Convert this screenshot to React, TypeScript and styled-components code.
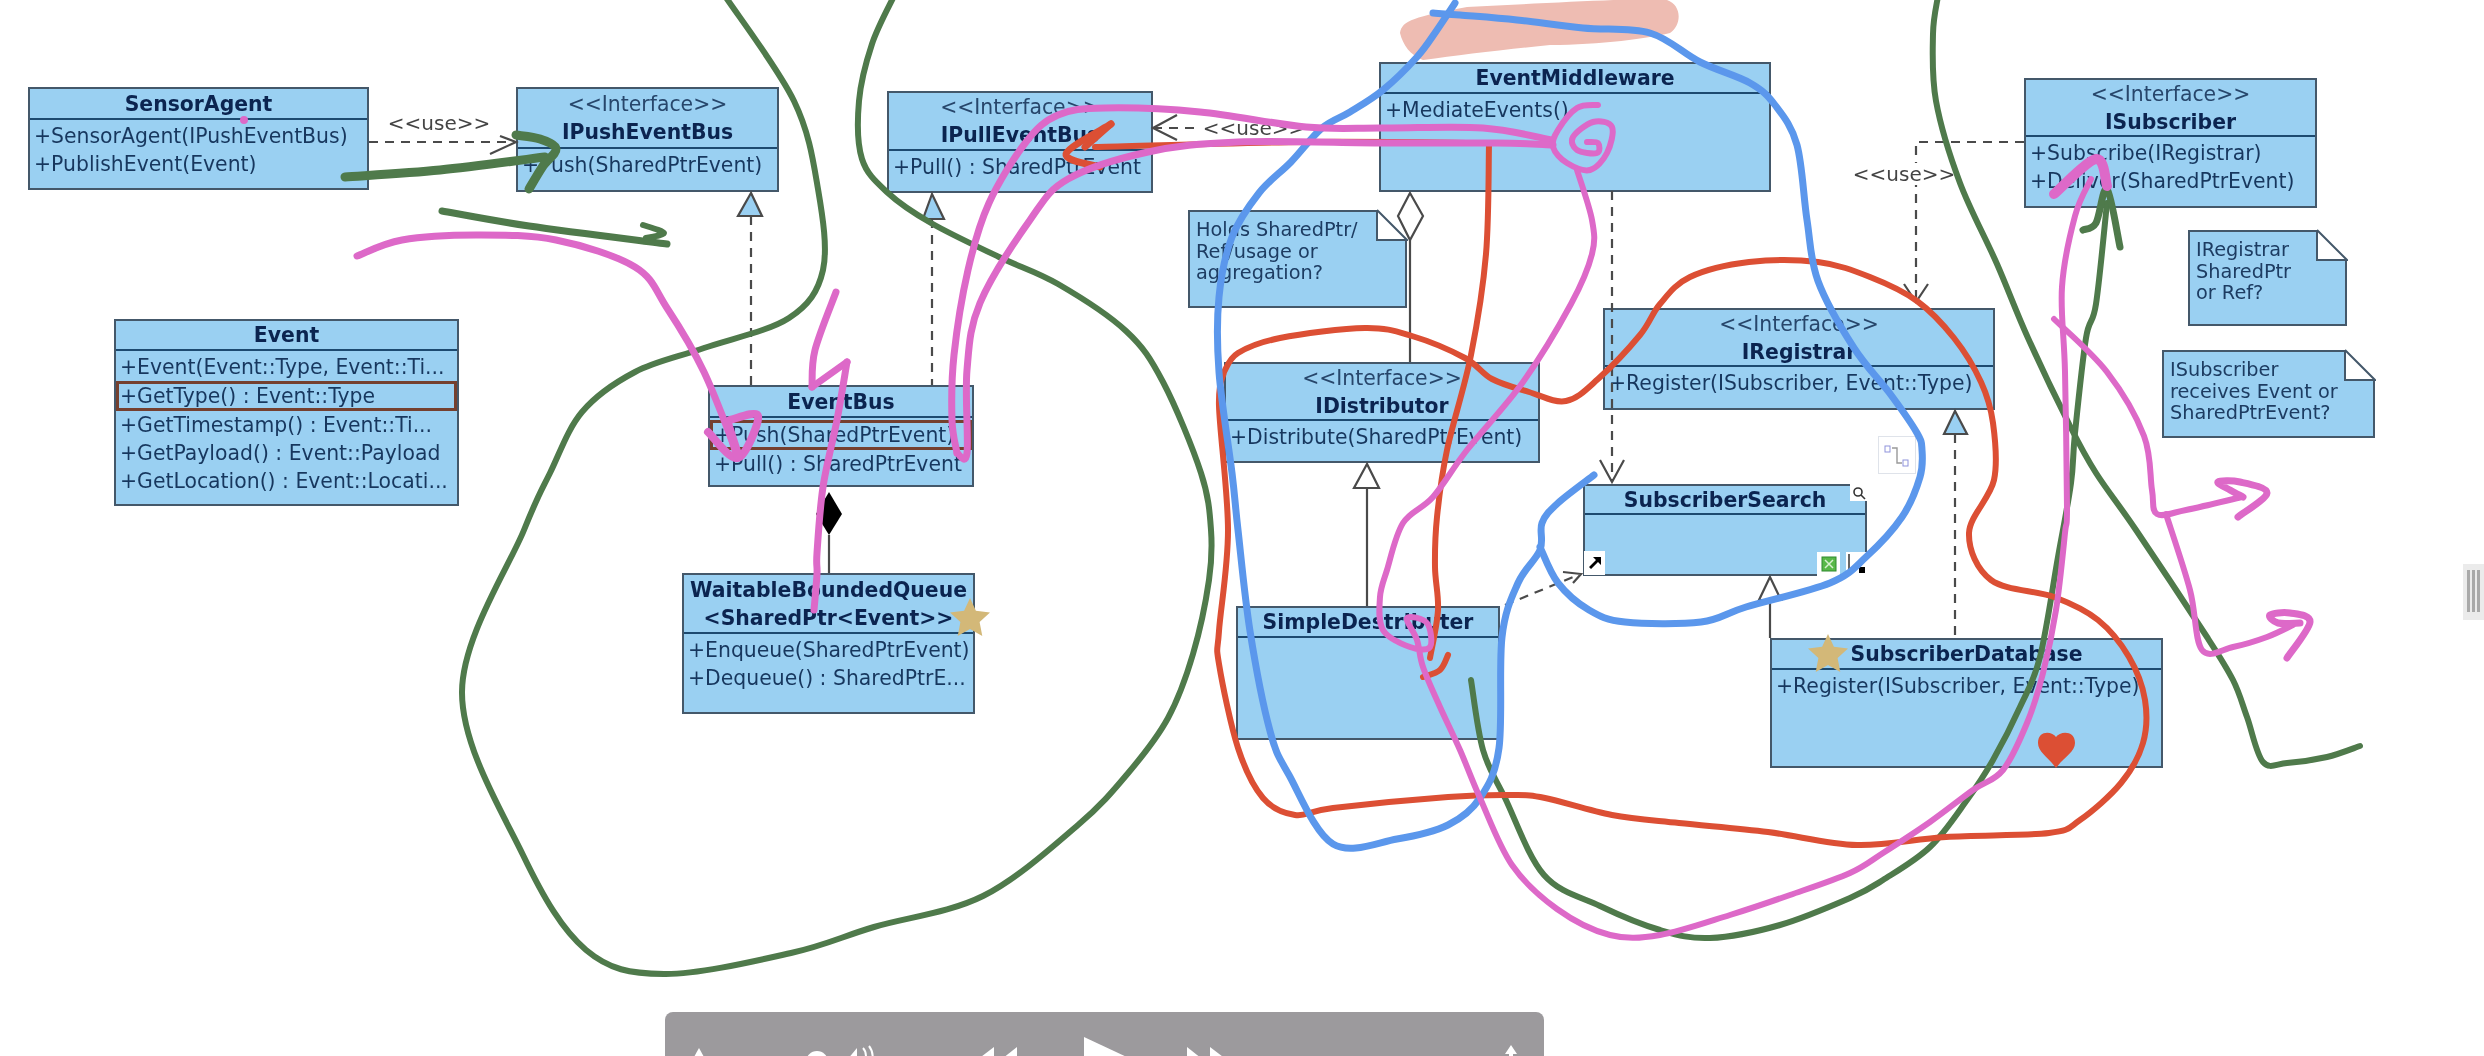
import React from "react";
import styled, { createGlobalStyle } from "styled-components";

const GlobalStyle = createGlobalStyle`
  html, body {
    margin: 0;
    padding: 0;
    background: #ffffff;
    overflow: hidden;
  }
`;

const Canvas = styled.div`
  position: relative;
  width: 2484px;
  height: 1056px;
  overflow: hidden;
  background: #ffffff;
  font-family: "DejaVu Sans", "Liberation Sans", sans-serif;
  filter: blur(0.5px);
`;

const Layer = styled.svg`
  position: absolute;
  left: 0;
  top: 0;
  width: 2484px;
  height: 1056px;
  pointer-events: none;
`;

const ClassBox = styled.div<{ $x: number; $y: number; $w: number; $h: number }>`
  position: absolute;
  left: ${p => p.$x}px;
  top: ${p => p.$y}px;
  width: ${p => p.$w}px;
  height: ${p => p.$h}px;
  box-sizing: border-box;
  display: flex;
  flex-direction: column;
  background: #9ad0f2;
  border: 2px solid #44586a;
  color: #17375e;
  font-size: 20.4px;
  line-height: 28px;
`;

const Header = styled.div<{ $h: number }>`
  flex: none;
  height: ${p => p.$h}px;
  box-sizing: border-box;
  display: flex;
  flex-direction: column;
  align-items: center;
  justify-content: center;
  border-bottom: 2px solid #1d4a70;
  white-space: nowrap;
`;

const Stereotype = styled.div`
  color: #27466b;
`;

const Title = styled.div`
  font-weight: 700;
  color: #0b2450;
`;

const Members = styled.div`
  flex: 1;
  padding-top: 2px;
`;

const Member = styled.div<{ $marked?: boolean }>`
  box-sizing: border-box;
  height: ${p => (p.$marked ? 30 : 28)}px;
  white-space: nowrap;
  overflow: hidden;
  border: ${p => (p.$marked ? "3px solid #75402f" : "none")};
  padding-left: ${p => (p.$marked ? 1 : 4)}px;
  line-height: ${p => (p.$marked ? 24 : 28)}px;
`;

const NoteBox = styled.div<{ $x: number; $y: number; $w: number; $h: number }>`
  position: absolute;
  left: ${p => p.$x}px;
  top: ${p => p.$y}px;
  width: ${p => p.$w}px;
  height: ${p => p.$h}px;
  box-sizing: border-box;
  padding: 7px 6px;
  background: #9ad0f2;
  border: 2px solid #44586a;
  color: #1d3c62;
  font-size: 19.3px;
  line-height: 21.5px;
  white-space: pre-line;
`;

const Fold = styled.svg`
  position: absolute;
  top: -3px;
  right: -3px;
  width: 32px;
  height: 32px;
`;

const UseLabel = styled.div<{ $x: number; $y: number }>`
  position: absolute;
  left: ${p => p.$x}px;
  top: ${p => p.$y}px;
  padding: 0 2px;
  transform: translate(-50%, -50%);
  background: #ffffff;
  color: #444444;
  font-size: 20px;
  line-height: 22px;
  white-space: nowrap;
`;

const Handle = styled.div<{ $x: number; $y: number; $w: number; $h: number }>`
  position: absolute;
  left: ${p => p.$x}px;
  top: ${p => p.$y}px;
  width: ${p => p.$w}px;
  height: ${p => p.$h}px;
  display: flex;
  align-items: center;
  justify-content: center;
  background: #ffffff;
  color: #111111;
`;

const FloatTip = styled.div`
  position: absolute;
  left: 1878px;
  top: 436px;
  width: 36px;
  height: 36px;
  display: flex;
  align-items: center;
  justify-content: center;
  background: #ffffff;
  border: 1px solid #dfe3ea;
`;

const Grip = styled.div`
  position: absolute;
  left: 2463px;
  top: 564px;
  width: 21px;
  height: 56px;
  box-sizing: border-box;
  padding: 6px 0 0 4px;
  display: flex;
  gap: 2px;
  background: #ebebeb;
`;

const GripBar = styled.span`
  display: block;
  width: 3px;
  height: 42px;
  background: #a9a9a9;
`;

const Toolbar = styled.div`
  position: absolute;
  left: 665px;
  top: 1012px;
  width: 879px;
  height: 90px;
  box-sizing: border-box;
  padding-top: 24px;
  display: flex;
  align-items: flex-start;
  background: #9c9a9d;
  border-radius: 8px;
`;

const ToolIcon = styled.svg<{ $gap: number; $w: number }>`
  flex: none;
  margin-left: ${p => p.$gap}px;
  width: ${p => p.$w}px;
  height: 60px;
  fill: #ffffff;
  stroke: none;
`;

type Pt = [number, number];

// catmull-rom through the hand-read points
const smooth = (pts: Pt[]) => {
  let d = `M${pts[0][0]} ${pts[0][1]}`;
  for (let i = 0; i < pts.length - 1; i++) {
    const p0 = pts[i - 1] || pts[i];
    const p1 = pts[i];
    const p2 = pts[i + 1];
    const p3 = pts[i + 2] || p2;
    const c1x = p1[0] + (p2[0] - p0[0]) / 6;
    const c1y = p1[1] + (p2[1] - p0[1]) / 6;
    const c2x = p2[0] - (p3[0] - p1[0]) / 6;
    const c2y = p2[1] - (p3[1] - p1[1]) / 6;
    d += `C${c1x.toFixed(1)} ${c1y.toFixed(1)} ${c2x.toFixed(1)} ${c2y.toFixed(1)} ${p2[0]} ${p2[1]}`;
  }
  return d;
};

const GREEN = "#4f7a4b";
const PINK = "#dd69c8";
const RED = "#dc4f34";
const BLUE = "#5b97ec";

const strokes: { c: string; w: number; pts: Pt[] }[] = [
  // big green loop, left
  {
    c: GREEN,
    w: 6,
    pts: [
      [725, -4], [794, 101], [818, 189], [823, 270], [789, 318], [704, 348], [635, 372], [582, 412], [550, 473],
      [524, 530], [462, 692], [523, 855], [586, 950], [664, 974], [791, 953], [874, 927], [983, 896], [1078, 825],
      [1129, 772], [1168, 718], [1193, 654], [1209, 580], [1211, 530], [1201, 473], [1163, 382], [1126, 331],
      [1058, 284], [999, 257], [931, 223], [888, 193], [862, 159], [859, 101], [872, 44], [894, -4],
    ],
  },
  // green arrow into IPushEventBus
  { c: GREEN, w: 9, pts: [[345, 177], [440, 170], [545, 157]] },
  { c: GREEN, w: 9, pts: [[516, 135], [540, 139], [556, 149], [543, 166], [529, 189]] },
  // green tick under SensorAgent
  { c: GREEN, w: 7, pts: [[442, 211], [529, 226], [667, 244]] },
  { c: GREEN, w: 6, pts: [[643, 225], [664, 233], [646, 238]] },
  // green curve, right side
  {
    c: GREEN,
    w: 6,
    pts: [
      [1938, -4], [1933, 34], [1936, 101], [1960, 183], [1997, 264], [2028, 338], [2070, 426], [2096, 473], [2136, 530],
      [2207, 637], [2233, 680], [2247, 717], [2263, 762], [2287, 763], [2327, 757], [2360, 746],
    ],
  },
  // green from SimpleDestributer up to ISubscriber
  {
    c: GREEN,
    w: 6,
    pts: [
      [1471, 680], [1483, 750], [1505, 798], [1544, 875], [1600, 906], [1660, 930], [1710, 938], [1780, 925], [1850, 898],
      [1883, 880], [1930, 847], [1967, 800], [1993, 760], [2020, 707], [2040, 657], [2058, 557], [2071, 483], [2075, 433],
      [2086, 338], [2096, 304], [2107, 203],
    ],
  },
  { c: GREEN, w: 7, pts: [[2083, 230], [2096, 223], [2107, 189], [2120, 247]] },
  // red arrow to IPullEventBus
  { c: RED, w: 6, pts: [[1486, 143], [1306, 142], [1095, 147]] },
  { c: RED, w: 7, pts: [[1111, 124], [1066, 154], [1100, 167]] },
  { c: RED, w: 7, pts: [[1111, 124], [1085, 147]] },
  // red from the middleware down
  {
    c: RED,
    w: 6,
    pts: [[1489, 145], [1486, 254], [1471, 355], [1447, 450], [1437, 517], [1435, 567], [1438, 610], [1430, 658]],
  },
  { c: RED, w: 6, pts: [[1448, 655], [1440, 670], [1423, 677]] },
  // red big loop
  {
    c: RED,
    w: 6,
    pts: [
      [1224, 372], [1238, 353], [1280, 338], [1365, 328], [1412, 336], [1465, 358], [1492, 379], [1529, 392], [1566, 401],
      [1598, 379], [1640, 335], [1660, 304], [1690, 277], [1749, 262], [1818, 262], [1870, 277], [1917, 301], [1954, 338],
      [1981, 382], [1993, 423], [1994, 480], [1969, 533], [1991, 580], [2054, 597], [2098, 620], [2129, 657], [2145, 700],
      [2143, 743], [2121, 783], [2080, 820], [2049, 833], [1946, 837], [1857, 845], [1768, 832], [1679, 823], [1612, 815],
      [1545, 798], [1512, 795], [1448, 797], [1333, 808], [1295, 815], [1263, 798], [1238, 748], [1219, 664], [1219, 631],
      [1228, 530], [1219, 406], [1224, 372],
    ],
  },
  // blue long loop
  {
    c: BLUE,
    w: 7,
    pts: [
      [1455, 3], [1437, 30], [1417, 57], [1383, 90], [1350, 112], [1322, 128], [1291, 162], [1259, 193], [1232, 237],
      [1219, 297], [1219, 372], [1232, 473], [1238, 530], [1250, 631], [1270, 731], [1289, 775], [1333, 844], [1397, 839],
      [1448, 825], [1480, 798], [1499, 748], [1502, 637], [1518, 583], [1540, 550], [1542, 523], [1558, 503], [1594, 475],
    ],
  },
  {
    c: BLUE,
    w: 7,
    pts: [
      [1540, 547], [1558, 583], [1589, 610], [1625, 622], [1701, 622], [1746, 607], [1830, 583], [1866, 557], [1902, 517],
      [1920, 477], [1922, 450], [1917, 433], [1891, 395], [1854, 348], [1818, 281], [1807, 220], [1797, 145], [1775, 105],
      [1750, 83], [1700, 62], [1650, 33], [1583, 28], [1517, 20], [1460, 15], [1433, 13],
    ],
  },
  // pink arrow to EventBus
  {
    c: PINK,
    w: 7,
    pts: [[357, 256], [402, 240], [476, 235], [556, 240], [635, 267], [667, 308], [704, 372], [738, 456]],
  },
  { c: PINK, w: 8, pts: [[708, 432], [738, 458], [758, 416], [730, 420]] },
  { c: PINK, w: 9, pts: [[728, 425], [738, 456]] },
  // pink lightning through EventBus
  { c: PINK, w: 7, pts: [[836, 292], [815, 350], [812, 387]] },
  { c: PINK, w: 7, pts: [[812, 387], [847, 362]] },
  { c: PINK, w: 7, pts: [[847, 362], [837, 420], [823, 487], [817, 553], [817, 574], [814, 610]] },
  // pink double strand between the spiral and EventBus
  {
    c: PINK,
    w: 7,
    pts: [
      [1552, 140], [1483, 128], [1383, 128], [1306, 127], [1200, 112], [1105, 108], [1058, 115], [1026, 142], [989, 203],
      [968, 270], [954, 355], [952, 420], [957, 453],
    ],
  },
  {
    c: PINK,
    w: 7,
    pts: [
      [957, 453], [967, 453], [967, 370], [980, 303], [1030, 220], [1068, 179], [1148, 152], [1238, 142], [1383, 143],
      [1497, 143], [1553, 145],
    ],
  },
  // spiral
  {
    c: PINK,
    w: 6,
    pts: [
      [1598, 105], [1577, 108], [1558, 130], [1553, 147], [1567, 163], [1590, 170], [1607, 153], [1612, 127], [1593, 122],
      [1573, 137], [1577, 150], [1597, 153], [1598, 143], [1587, 142],
    ],
  },
  // pink long line from the spiral round to ISubscriber
  {
    c: PINK,
    w: 6,
    pts: [
      [1577, 170], [1592, 220], [1592, 254], [1571, 304], [1523, 382], [1467, 450], [1433, 497], [1403, 523], [1387, 570],
      [1380, 597], [1383, 630], [1410, 647], [1430, 647], [1427, 623], [1407, 618], [1417, 640], [1423, 667], [1440, 707],
      [1460, 750], [1480, 798], [1512, 865], [1557, 909], [1610, 935], [1660, 935], [1730, 915], [1790, 895], [1850, 873],
      [1883, 853], [1930, 822], [1973, 790], [2003, 770], [2027, 723], [2043, 673], [2056, 610], [2065, 533], [2067, 507],
      [2065, 372], [2062, 287], [2075, 216], [2091, 179],
    ],
  },
  { c: PINK, w: 10, pts: [[2054, 194], [2096, 159], [2107, 186]] },
  // pink, right side arrows
  {
    c: PINK,
    w: 6,
    pts: [[2054, 319], [2107, 372], [2144, 436], [2152, 490], [2157, 514], [2186, 510], [2242, 497]],
  },
  { c: PINK, w: 7, pts: [[2238, 517], [2267, 493], [2240, 482], [2218, 482], [2230, 490], [2243, 497]] },
  { c: PINK, w: 6, pts: [[2166, 514], [2190, 590], [2202, 650], [2233, 647], [2267, 637], [2293, 625]] },
  { c: PINK, w: 7, pts: [[2287, 658], [2310, 622], [2290, 613], [2270, 615], [2278, 623], [2300, 623]] },
];

const Star = ({ cx, cy, r }: { cx: number; cy: number; r: number }) => {
  const pts = Array.from({ length: 10 }, (_, i) => {
    const rad = i % 2 ? r * 0.48 : r;
    const a = (i * Math.PI) / 5 - Math.PI / 2;
    return `${(cx + rad * Math.cos(a)).toFixed(1)},${(cy + rad * Math.sin(a)).toFixed(1)}`;
  });
  return <polygon points={pts.join(" ")} fill="#d3b878" />;
};

const Smear = () => (
  <Layer viewBox="0 0 2484 1056">
    <path
      d="M1400 33C1402 20 1415 17 1467 7C1550 3 1650 -3 1667 0C1682 5 1682 25 1670 33C1650 38 1600 45 1550 45C1500 50 1460 55 1423 60C1410 55 1403 45 1400 33Z"
      fill="#eebcb2"
    />
  </Layer>
);

const Connectors = () => (
  <Layer viewBox="0 0 2484 1056">
    <g stroke="#4a4a4a" strokeWidth="2.2" fill="none">
      <g strokeDasharray="9 7">
        <path d="M369 142H516" />
        <path d="M751 216V385" />
        <path d="M932 219V385" />
        <path d="M1153 128H1379" />
        <path d="M1612 191V482" />
        <path d="M2024 142H1916V298" />
        <path d="M1955 434V638" />
        <path d="M1505 605L1578 575" />
      </g>
      <path d="M490 154L516 142L500 136" />
      <path d="M1177 115L1153 128L1177 140" />
      <path d="M1600 460L1612 482L1624 460" />
      <path d="M1904 284L1916 302L1928 284" />
      <path d="M1563 572L1581 574L1573 583" />
      <path d="M1410 240V362" />
      <path d="M1367 488V606" />
      <path d="M1770 600V638" />
      <path d="M829 535V573" />
      <polygon points="751,193 738,216 762,216" fill="#9ad0f2" />
      <polygon points="932,194 923,219 944,219" fill="#9ad0f2" />
      <polygon points="1955,411 1944,434 1967,434" fill="#9ad0f2" />
      <polygon points="1367,464 1354,488 1379,488" fill="#ffffff" />
      <polygon points="1770,577 1759,600 1781,600" fill="#ffffff" />
      <polygon points="1410,193 1398,216 1410,240 1423,216" fill="#ffffff" />
    </g>
    <polygon points="829,492 816,514 829,535 842,514" fill="#000000" />
  </Layer>
);

const Ink = () => (
  <Layer viewBox="0 0 2484 1056">
    <g fill="none" strokeLinecap="round" strokeLinejoin="round">
      {strokes.map((s, i) => (
        <path key={i} d={smooth(s.pts)} stroke={s.c} strokeWidth={s.w} />
      ))}
    </g>
    <circle cx={244} cy={120} r={4} fill={PINK} />
    <Star cx={970} cy={619} r={21} />
    <Star cx={1828} cy={655} r={21} />
    <path d="M2056 768C2048 757 2038 752 2038 743C2038 730 2052 731 2056 737C2060 731 2075 730 2075 743C2075 752 2064 757 2056 768Z" fill={RED} />
  </Layer>
);

const Note = ({ x, y, w, h, text }: { x: number; y: number; w: number; h: number; text: string }) => (
  <NoteBox $x={x} $y={y} $w={w} $h={h}>
    {text}
    <Fold viewBox="0 0 32 32">
      <polygon points="0,0 32,0 32,32 0,32" fill="#ffffff" />
      <path d="M1 1V31H31L1 1" fill="none" stroke="#44586a" strokeWidth="2" />
    </Fold>
  </NoteBox>
);

const classes: {
  x: number;
  y: number;
  w: number;
  h: number;
  head: number;
  stereo?: boolean;
  title: string[];
  members: { t: string; marked?: boolean }[];
}[] = [
  { x: 28, y: 87, w: 341, h: 103, head: 31, title: ["SensorAgent"], members: [{ t: "+SensorAgent(IPushEventBus)" }, { t: "+PublishEvent(Event)" }] },
  { x: 516, y: 87, w: 263, h: 105, head: 60, stereo: true, title: ["IPushEventBus"], members: [{ t: "+Push(SharedPtrEvent)" }] },
  { x: 114, y: 319, w: 345, h: 187, head: 30, title: ["Event"], members: [{ t: "+Event(Event::Type, Event::Ti..." }, { t: "+GetType() : Event::Type", marked: true }, { t: "+GetTimestamp() : Event::Ti..." }, { t: "+GetPayload() : Event::Payload" }, { t: "+GetLocation() : Event::Locati..." }] },
  { x: 708, y: 385, w: 266, h: 102, head: 31, title: ["EventBus"], members: [{ t: "+Push(SharedPtrEvent)", marked: true }, { t: "+Pull() : SharedPtrEvent" }] },
  { x: 682, y: 573, w: 293, h: 141, head: 59, title: ["WaitableBoundedQueue", "<SharedPtr<Event>>"], members: [{ t: "+Enqueue(SharedPtrEvent)" }, { t: "+Dequeue() : SharedPtrE..." }] },
  { x: 887, y: 91, w: 266, h: 102, head: 58, stereo: true, title: ["IPullEventBus"], members: [{ t: "+Pull() : SharedPtrEvent" }] },
  { x: 1379, y: 62, w: 392, h: 130, head: 30, title: ["EventMiddleware"], members: [{ t: "+MediateEvents()" }] },
  { x: 1224, y: 362, w: 316, h: 101, head: 57, stereo: true, title: ["IDistributor"], members: [{ t: "+Distribute(SharedPtrEvent)" }] },
  { x: 1236, y: 606, w: 264, h: 134, head: 30, title: ["SimpleDestributer"], members: [] },
  { x: 1603, y: 308, w: 392, h: 102, head: 57, stereo: true, title: ["IRegistrar"], members: [{ t: "+Register(ISubscriber, Event::Type)" }] },
  { x: 1583, y: 484, w: 284, h: 92, head: 29, title: ["SubscriberSearch"], members: [] },
  { x: 1770, y: 638, w: 393, h: 130, head: 30, title: ["SubscriberDatabase"], members: [{ t: "+Register(ISubscriber, Event::Type)" }] },
  { x: 2024, y: 78, w: 293, h: 130, head: 57, stereo: true, title: ["ISubscriber"], members: [{ t: "+Subscribe(IRegistrar)" }, { t: "+Deliver(SharedPtrEvent)" }] },
];

const App = () => (
  <>
    <GlobalStyle />
    <Canvas>
      <Smear />
      {classes.map(c => (
        <ClassBox key={c.title[0]} $x={c.x} $y={c.y} $w={c.w} $h={c.h}>
          <Header $h={c.head}>
            {c.stereo && <Stereotype>{"<<Interface>>"}</Stereotype>}
            {c.title.map(t => (
              <Title key={t}>{t}</Title>
            ))}
          </Header>
          <Members>
            {c.members.map(m => (
              <Member key={m.t} $marked={m.marked}>
                {m.t}
              </Member>
            ))}
          </Members>
        </ClassBox>
      ))}
      <Note x={1188} y={210} w={219} h={98} text={"Holds SharedPtr/\nRef/usage or\naggregation?"} />
      <Note x={2188} y={230} w={159} h={96} text={"IRegistrar\nSharedPtr\nor Ref?"} />
      <Note x={2162} y={350} w={213} h={88} text={"ISubscriber\nreceives Event or\nSharedPtrEvent?"} />
      <Connectors />
      <UseLabel $x={439} $y={123}>{"<<use>>"}</UseLabel>
      <UseLabel $x={1254} $y={128}>{"<<use>>"}</UseLabel>
      <UseLabel $x={1904} $y={174}>{"<<use>>"}</UseLabel>

      <Handle $x={1850} $y={484} $w={17} $h={17}>
        <svg width="14" height="14" viewBox="0 0 14 14" fill="none" stroke="#333333" strokeWidth="1.6">
          <circle cx="6" cy="6" r="4" />
          <path d="M9 9L13 13" />
        </svg>
      </Handle>
      <Handle $x={1584} $y={551} $w={21} $h={24}>
        <svg width="14" height="14" viewBox="0 0 14 14" fill="#000000">
          <path d="M5 1H13V9L10 6L3 13L1 11L8 4Z" />
        </svg>
      </Handle>
      <Handle $x={1817} $y={552} $w={23} $h={24}>
        <svg width="20" height="20" viewBox="0 0 20 20">
          <rect x="3" y="3" width="14" height="14" fill="#58b848" stroke="#2f8a2e" />
          <path d="M6 6L14 14M14 6L6 14" stroke="#d8f0d0" strokeWidth="1.5" />
        </svg>
      </Handle>
      <Handle $x={1846} $y={552} $w={21} $h={24}>
        <svg width="20" height="22" viewBox="0 0 20 22">
          <path d="M2 1V18H8" fill="none" stroke="#333333" strokeWidth="1.5" />
          <rect x="12" y="14" width="6" height="6" fill="#000000" />
        </svg>
      </Handle>
      <FloatTip>
        <svg width="30" height="30" viewBox="0 0 30 30" fill="none" stroke="#8f93dc" strokeWidth="1">
          <rect x="3" y="6" width="5" height="6" />
          <rect x="21" y="20" width="5" height="6" />
          <path d="M10 8H15V23H20" stroke="#999999" strokeWidth="1.4" />
        </svg>
      </FloatTip>

      <Ink />

      <Grip>
        <GripBar />
        <GripBar />
        <GripBar />
      </Grip>

      <Toolbar>
        <ToolIcon $gap={22} $w={24} viewBox="0 0 24 60">
          <path d="M12 12L22 30H2Z" />
        </ToolIcon>
        <ToolIcon $gap={94} $w={24} viewBox="0 0 24 60">
          <circle cx="12" cy="26" r="11" />
        </ToolIcon>
        <ToolIcon $gap={18} $w={34} viewBox="0 0 34 60">
          <path d="M0 24L10 12V34Z" />
          <path d="M16 12C20 16 20 26 16 30M22 10C27 16 27 28 22 34" fill="none" stroke="#ffffff" strokeWidth="2" />
        </ToolIcon>
        <ToolIcon $gap={88} $w={50} viewBox="0 0 50 60">
          <path d="M25 11V50L0 30Z" />
          <path d="M48 11V50L24 30Z" />
        </ToolIcon>
        <ToolIcon $gap={61} $w={70} viewBox="0 0 70 60">
          <path d="M4 1V60L66 30Z" />
        </ToolIcon>
        <ToolIcon $gap={35} $w={50} viewBox="0 0 50 60">
          <path d="M2 11V50L26 30Z" />
          <path d="M25 11V50L50 30Z" />
        </ToolIcon>
        <ToolIcon $gap={265} $w={22} viewBox="0 0 22 60">
          <path d="M11 9L17 18H13V30H9V18H5Z" />
          <path d="M1 22H7V24H3V30H1ZM15 22H21V30H19V24H15Z" />
        </ToolIcon>
      </Toolbar>
    </Canvas>
  </>
);

export default App;
